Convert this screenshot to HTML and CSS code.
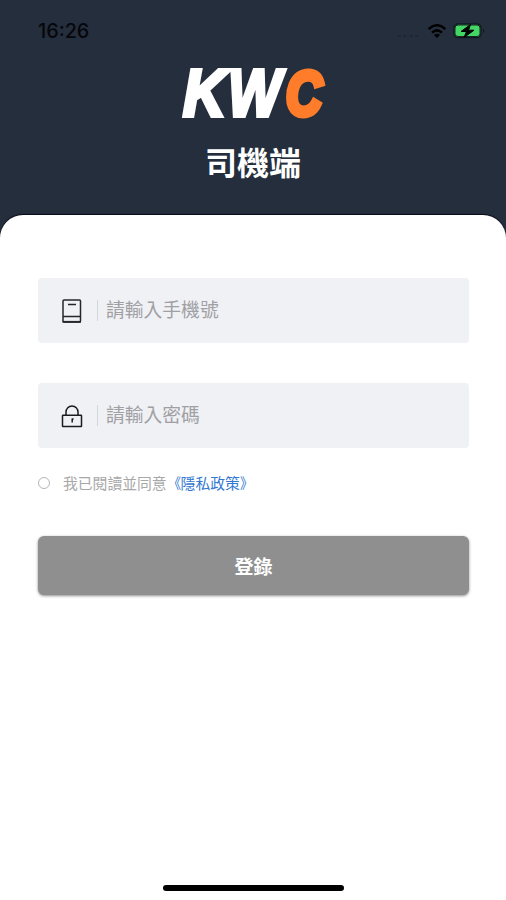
FILE: index.html
```html
<!DOCTYPE html>
<html lang="zh-Hant">
<head>
<meta charset="utf-8">
<meta name="viewport" content="width=device-width, initial-scale=1">
<title>KWC 司機端</title>
<link rel="stylesheet" href="styles.css">
</head>
<body>
<div class="screen">
  <header class="header">
    <div class="status">
      <span class="time">16:26</span>
      <div class="indicators">
        <svg class="signal" width="22" height="4" viewBox="0 0 22 4"><path d="M1 2h3M6 2h3M13 2h3M18 2h3" stroke="#1c2430" stroke-width="1.6"/></svg>
        <svg class="wifi" width="20" height="15" viewBox="0 0 20 15"><path d="M1.6 5.1Q10-2.6 18.4 5.1M5 8.6Q10 4.2 15 8.6" fill="none" stroke="#000" stroke-width="2.5"/><path d="M7 11Q10 8.7 13 11L10 14z"/></svg>
        <svg class="battery" width="33" height="16" viewBox="0 0 33 16"><rect x="1" y="1" width="27" height="13.5" rx="4" fill="#43d765" stroke="#111a24" stroke-width="1.6"/><rect x="2" y="2" width="25" height="11.5" rx="3" fill="none" stroke="#17251f"/><path d="M17.5 1.5L8 8.5h5.5L11 14.5l10-7.3h-5.5z" stroke="#000"/><path d="M30 5.5q3 2.2 0 4.5z" fill="#121923"/></svg>
      </div>
    </div>
    <svg class="logo" width="170" height="90" viewBox="0 0 170 90">
      <text class="logo-text" x="15" y="66" textLength="43" lengthAdjust="spacingAndGlyphs">K</text>
      <text class="logo-text" x="60" y="66" textLength="53" lengthAdjust="spacingAndGlyphs">W</text>
      <text class="logo-text logo-accent" x="118" y="65" textLength="36" lengthAdjust="spacingAndGlyphs">C</text>
    </svg>
    <h1 class="title">司機端</h1>
  </header>
  <main class="sheet">
    <div class="field">
      <svg class="field-icon" width="22" height="26" viewBox="0 0 22 26" fill="none" stroke="#26262b" stroke-width="1.5"><rect x="2" y="2" width="17.5" height="22" rx="1"/><path d="M2 18.6h17.5M7 6.5h8"/><path d="M1.5 23.8H20" stroke-width="1.8"/></svg>
      <span class="divider"></span>
      <span class="placeholder">請輸入手機號</span>
    </div>
    <div class="field">
      <svg class="field-icon" width="22" height="26" viewBox="0 0 22 26" fill="none" stroke="#1c1c20" stroke-width="1.5"><rect x="1.5" y="12.2" width="19" height="11.3" rx=".5"/><path d="M5 12V9.2a6 6.3 0 0 1 12 0V12M11.2 15.5v4M11.2 16h1.4"/></svg>
      <span class="divider"></span>
      <span class="placeholder">請輸入密碼</span>
    </div>
    <div class="agreement">
      <span class="radio"></span>
      <span class="agree-text">我已閱讀並同意</span>
      <span class="policy"><span class="bracket open">《</span>隱私政策<span class="bracket close">》</span></span>
    </div>
    <div class="login">登錄</div>
    <div class="home-bar"></div>
  </main>
</div>
</body>
</html>
```
FILE: styles.css
```css
* { box-sizing: border-box; }
body {
  margin: 0;
  background: #252e3c;
  font-family: "Noto Sans CJK TC", sans-serif;
}
.screen {
  display: flex;
  flex-direction: column;
  width: 506px;
  height: 900px;
  overflow: hidden;
}
.header {
  display: flex;
  flex-direction: column;
  align-items: center;
  height: 215px;
}
.status {
  display: flex;
  justify-content: space-between;
  align-items: center;
  width: 100%;
  height: 62px;
  padding: 0 20px 0 38px;
  flex: none;
}
.time {
  font: 500 19.8px/24px Inter, sans-serif;
  color: #05070c;
}
.indicators { display: flex; align-items: center; }
.signal { margin: 9px 8px 0 0; }
.wifi { margin-right: 6px; }
.logo { flex: none; margin: -12px 0 -15px; }
.logo-text {
  font: italic 700 66px "Liberation Sans", sans-serif;
  fill: #fff;
  stroke: #fff;
  stroke-width: 4px;
}
.logo-accent {
  font-size: 63px;
  fill: #ff7c2a;
  stroke: #ff7c2a;
  stroke-width: 6px;
}
.title {
  margin: 13px 0 0;
  color: #fff;
  font-size: 32px;
  line-height: 46px;
  font-weight: 700;
}
.sheet {
  display: flex;
  flex-direction: column;
  flex: 1;
  padding: 63px 37px 9px 38px;
  border-radius: 23px 23px 0 0;
  background: #fff;
  box-shadow: 0 -1px 1px #080b17;
}
.field {
  display: flex;
  align-items: center;
  height: 65px;
  flex: none;
  padding-left: 23px;
  border-radius: 4px;
  background: #f0f1f5;
}
.field + .field { margin-top: 40px; }
.field-icon { flex: none; }
.divider { width: 1px; height: 21px; margin: 0 8px 0 14px; background: #d5d6dc; }
.placeholder {
  margin-top: -4px;
  color: #a0a0a4;
  font-size: 18.8px;
  line-height: 28px;
}
.agreement {
  display: flex;
  align-items: center;
  height: 24px;
  margin-top: 23px;
  font-size: 14.8px;
  line-height: 24px;
}
.radio {
  width: 12px;
  height: 12px;
  margin-right: 13px;
  border: 1px solid #b5b5b5;
  border-radius: 50%;
}
.agree-text { color: #a8a8a8; }
.policy {
  display: flex;
  margin-left: 6px;
  color: #3278cf;
}
.bracket {
  display: flex;
  width: 8px;
  transform: scaleX(.88);
}
.open { justify-content: flex-end; transform-origin: right; }
.close { transform-origin: left; }
.login {
  display: flex;
  align-items: center;
  justify-content: center;
  height: 59px;
  margin-top: 41px;
  flex: none;
  border-radius: 6px;
  background: #8f8f8f;
  box-shadow: 0 1px 3px rgba(0, 0, 0, .45);
  color: #fff;
  font-size: 19px;
  font-weight: 700;
}
.home-bar {
  width: 181px;
  height: 6px;
  margin: auto auto 0;
  border-radius: 3px;
  background: #000;
}
```
